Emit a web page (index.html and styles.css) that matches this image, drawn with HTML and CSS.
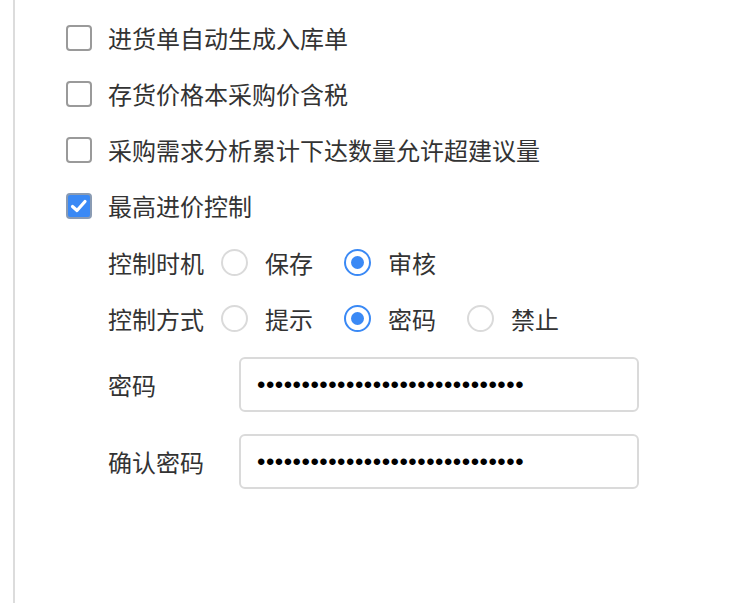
FILE: index.html
```html
<!DOCTYPE html>
<html lang="zh-CN">
<head>
<meta charset="utf-8">
<title>采购设置</title>
<link rel="stylesheet" href="styles.css">
</head>
<body>
<div class="panel">
  <div class="check-row"><span class="box"></span><span class="label">进货单自动生成入库单</span></div>
  <div class="check-row"><span class="box"></span><span class="label">存货价格本采购价含税</span></div>
  <div class="check-row"><span class="box"></span><span class="label">采购需求分析累计下达数量允许超建议量</span></div>
  <div class="check-row"><span class="box checked"><svg viewBox="0 0 22 22" width="22" height="22"><polyline points="4.5,11.5 9,15.5 17,6.5" fill="none" stroke="#fff" stroke-width="3.2" stroke-linecap="round" stroke-linejoin="round"/></svg></span><span class="label">最高进价控制</span></div>
  <div class="sub">
    <div class="radio-row">
      <span class="field-name">控制时机</span>
      <span class="option"><span class="radio"></span><span>保存</span></span>
      <span class="option"><span class="radio on"></span><span>审核</span></span>
    </div>
    <div class="radio-row">
      <span class="field-name">控制方式</span>
      <span class="option"><span class="radio"></span><span>提示</span></span>
      <span class="option"><span class="radio on"></span><span>密码</span></span>
      <span class="option"><span class="radio"></span><span>禁止</span></span>
    </div>
    <div class="input-rows">
      <div class="input-row">
        <span class="input-name">密码</span>
        <input class="pwd" type="password" value="123456789012345678901234567890">
      </div>
      <div class="input-row">
        <span class="input-name">确认密码</span>
        <input class="pwd" type="password" value="123456789012345678901234567890">
      </div>
    </div>
  </div>
</div>
</body>
</html>
```
FILE: styles.css
```css
html, body {
  margin: 0;
  padding: 0;
  background: #fff;
}
body {
  font-family: "Noto Sans CJK SC", "Noto Sans", sans-serif;
  color: #333;
  font-size: 24px;
}
.panel {
  margin-left: 13px;
  border-left: 2px solid #dcdcdc;
  min-height: 603px;
  box-sizing: border-box;
  padding: 10px 0 0 51px;
}
.check-row {
  height: 56px;
  display: flex;
  align-items: center;
  gap: 16px;
}
.label {
  line-height: 1;
}
.box {
  width: 26px;
  height: 26px;
  box-sizing: border-box;
  border: 2px solid #9a9a9a;
  border-radius: 4px;
  display: flex;
  align-items: center;
  justify-content: center;
  background: #fff;
}
.box.checked {
  background: #3a89f5;
  border-color: #8a9bb3;
}
.sub {
  padding-left: 42px;
}
.radio-row {
  height: 56px;
  display: flex;
  align-items: center;
}
.field-name {
  width: 113px;
}
.option {
  display: flex;
  align-items: center;
  gap: 17px;
  margin-right: 31px;
}
.radio {
  width: 27px;
  height: 27px;
  box-sizing: border-box;
  border: 2px solid #dadada;
  border-radius: 50%;
  display: flex;
  align-items: center;
  justify-content: center;
}
.radio.on {
  border-color: #3a89f5;
}
.radio.on::after {
  content: "";
  width: 13px;
  height: 13px;
  border-radius: 50%;
  background: #3a89f5;
}
.input-rows {
  padding-top: 11px;
  display: flex;
  flex-direction: column;
  gap: 22px;
}
.input-row {
  display: flex;
  align-items: center;
}
.input-name {
  width: 131px;
}
.pwd {
  width: 400px;
  height: 55px;
  box-sizing: border-box;
  border: 2px solid #dadada;
  border-radius: 6px;
  padding: 0 16px;
  font-family: "Liberation Sans", sans-serif;
  font-size: 24px;
  letter-spacing: 0.5px;
  color: #000;
  outline: none;
  background: #fff;
}
```
